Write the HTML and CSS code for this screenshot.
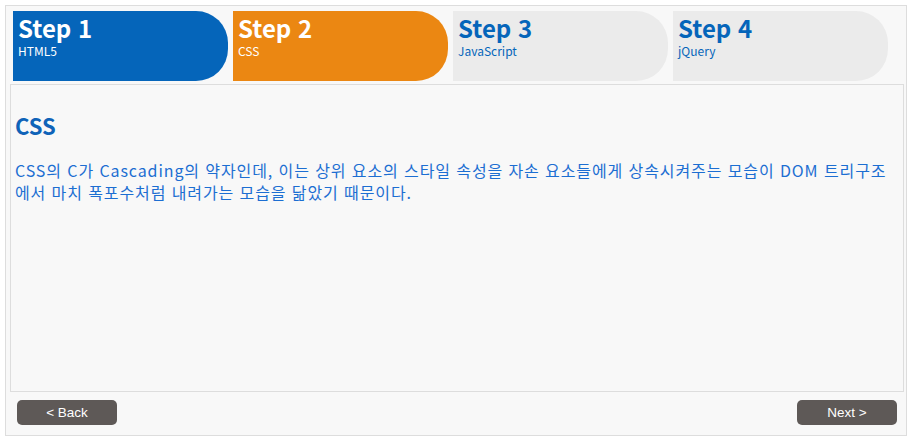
FILE: index.html
```html
<!DOCTYPE html>
<html lang="ko">
<head>
<meta charset="utf-8">
<title>Steps</title>
<link rel="stylesheet" href="styles.css">
</head>
<body>
<div class="wizard">
  <div class="steps">
    <div class="step done"><div class="step-title">Step 1</div><div class="step-sub">HTML5</div></div>
    <div class="step current"><div class="step-title">Step 2</div><div class="step-sub">CSS</div></div>
    <div class="step"><div class="step-title">Step 3</div><div class="step-sub">JavaScript</div></div>
    <div class="step"><div class="step-title">Step 4</div><div class="step-sub">jQuery</div></div>
  </div>
  <div class="panel">
    <h2 class="panel-title">CSS</h2>
    <p class="panel-text">CSS의 C가 Cascading의 약자인데, 이는 상위 요소의 스타일 속성을 자손 요소들에게 상속시켜주는 모습이 DOM 트리구조에서 마치 폭포수처럼 내려가는 모습을 닮았기 때문이다.</p>
  </div>
  <div class="actions">
    <button class="btn">&lt; Back</button>
    <button class="btn">Next &gt;</button>
  </div>
</div>
</body>
</html>
```
FILE: styles.css
```css
html, body {
  margin: 0;
  padding: 0;
  background: #ffffff;
}
body {
  padding: 5px 6px 0 5px;
  font-family: "Noto Sans CJK KR", "Noto Sans", sans-serif;
}
.wizard {
  border: 1px solid #dddddd;
  background: #f8f8f8;
  padding: 5px 2px 10px 4px;
  height: 431px;
  box-sizing: border-box;
  display: flex;
  flex-direction: column;
}
.steps {
  display: flex;
  gap: 5px;
  padding-left: 3px;
}
.step {
  width: 215px;
  height: 70px;
  box-sizing: border-box;
  background: #ebebeb;
  border-radius: 0 32px 32px 0;
  padding: 3px 5px 0;
  color: #0565ba;
}
.step.done { background: #0565ba; color: #ffffff; }
.step.current { background: #eb8712; color: #ffffff; }
.step-title {
  font-size: 24px;
  font-weight: 700;
  line-height: 28px;
}
.step-sub {
  font-size: 12px;
  line-height: 16px;
  margin-top: 1px;
}
.panel {
  margin-top: 3px;
  flex: 1;
  border: 1px solid #dddddd;
  background: #f8f8f8;
  padding: 0 4px;
}
.panel-title {
  margin: 25px 0 0;
  font-size: 22px;
  font-weight: 700;
  line-height: 30px;
  color: #0f63b8;
}
.panel-text {
  margin: 19px 0 0;
  font-size: 16px;
  line-height: 22px;
  letter-spacing: 0.9px;
  color: #1c6ed2;
}
.actions {
  display: flex;
  justify-content: space-between;
  padding: 8px 7px 0;
}
.btn {
  width: 100px;
  height: 25px;
  border: 0;
  border-radius: 5px;
  background: #5e5957;
  color: #ffffff;
  font-family: "Liberation Sans", Arial, sans-serif;
  font-size: 13.5px;
  padding: 0;
}
```
